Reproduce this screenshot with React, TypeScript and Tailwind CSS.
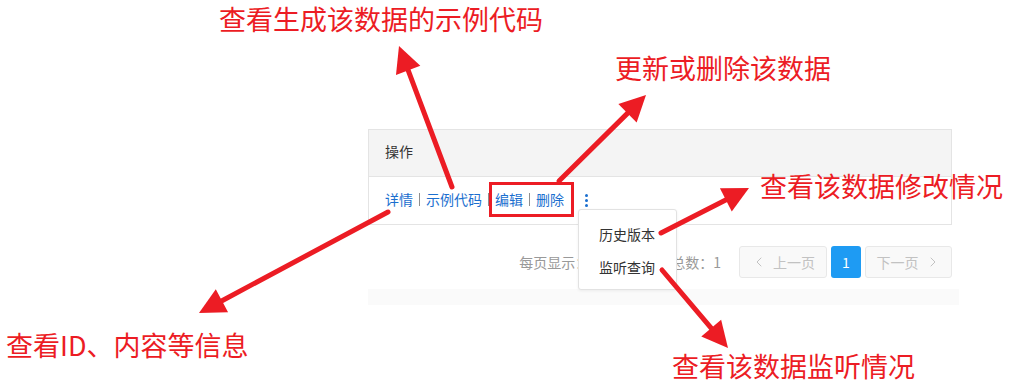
import React from "react";
import { ChevronLeft, ChevronRight } from "lucide-react";

const RED = "#ec1c24";

type Arrow = { x1: number; y1: number; x2: number; y2: number };

const ARROWS: Arrow[] = [
  { x1: 452, y1: 187, x2: 399, y2: 46 },
  { x1: 559, y1: 181, x2: 646, y2: 95 },
  { x1: 388, y1: 212, x2: 199, y2: 313 },
  { x1: 661, y1: 233, x2: 749, y2: 188 },
  { x1: 662, y1: 270, x2: 728, y2: 348 },
];

function ArrowShape({ x1, y1, x2, y2 }: Arrow) {
  const dx = x2 - x1;
  const dy = y2 - y1;
  const len = Math.hypot(dx, dy);
  const ux = dx / len;
  const uy = dy / len;
  const headLen = 26;
  const headW = 13;
  const bx = x2 - ux * headLen;
  const by = y2 - uy * headLen;
  const pts = [
    `${x2},${y2}`,
    `${bx - uy * headW},${by + ux * headW}`,
    `${bx + uy * headW},${by - ux * headW}`,
  ].join(" ");
  return (
    <g>
      <line x1={x1} y1={y1} x2={bx + ux * 2} y2={by + uy * 2} stroke={RED} strokeWidth={5} strokeLinecap="round" />
      <polygon points={pts} fill={RED} />
    </g>
  );
}

function Sep() {
  return <span className="mx-[6px] inline-block h-[13px] w-px bg-[#8f8f8f] align-[-1px]" />;
}

export default function App() {
  return (
    <div
      className="relative h-[388px] w-[1012px] overflow-hidden bg-white"
      style={{ fontFamily: '"Noto Sans CJK SC", "Noto Sans", sans-serif' }}
    >
      {/* table */}
      <div className="ml-[368px] pt-[129px]">
        <div className="w-[584px]">
          <div className="flex h-[48px] items-center border border-[#e4e4e4] bg-[#f4f4f4] pb-[3px] pl-[16px] text-[14px] text-[#333]">
            操作
          </div>
          <div className="flex h-[48px] items-center border-x border-b border-[#e4e4e4] pb-[2px] pl-[16px] text-[14px] text-[#1b6fcf]">
            <span>详情</span>
            <Sep />
            <span>示例代码</span>
            <Sep />
            <span className="relative">
              编辑
              <Sep />
              删除
              <span className="absolute -bottom-[7px] -left-[6px] -right-[10px] -top-[7px] border-[3px] border-[#ec1c24]" />
            </span>
            <span className="ml-[21px] flex flex-col gap-[2px] pt-[2px]">
              <span className="h-[3px] w-[3px] rounded-full bg-[#1b6fcf]" />
              <span className="h-[3px] w-[3px] rounded-full bg-[#1b6fcf]" />
              <span className="h-[3px] w-[3px] rounded-full bg-[#1b6fcf]" />
            </span>
          </div>

          {/* pagination */}
          <div className="mt-[21px] flex h-[32px] items-center justify-end text-[14px] text-[#999]">
            <span>每页显示：</span>
            <span className="w-[82px]" />
            <span>总数：1</span>
            <div className="ml-[18px] flex h-full w-[88px] items-center justify-center gap-[6px] rounded-[3px] border border-[#e8e8e8] bg-[#f9f9f9] text-[#c2c2c2]">
              <ChevronLeft className="h-[16px] w-[16px]" strokeWidth={1.5} />
              <span>上一页</span>
            </div>
            <div className="ml-[4px] flex h-full w-[30px] items-center justify-center rounded-[3px] bg-[#1e9bf3] text-white">
              1
            </div>
            <div className="ml-[4px] flex h-full w-[87px] items-center justify-center gap-[6px] rounded-[3px] border border-[#e8e8e8] bg-[#f9f9f9] text-[#c2c2c2]">
              <span>下一页</span>
              <ChevronRight className="h-[16px] w-[16px]" strokeWidth={1.5} />
            </div>
          </div>
        </div>
        <div className="mt-[11px] h-[16px] w-[591px] bg-[#fafafa]" />
      </div>

      {/* dropdown menu */}
      <div className="absolute left-[578px] top-[209px] flex h-[81px] w-[99px] flex-col rounded-[3px] border border-[#e2e2e2] bg-white pl-[20px] pt-[13px] text-[14px] text-[#333] shadow-[0_1px_3px_rgba(0,0,0,0.06)]">
        <span className="leading-[22px]">历史版本</span>
        <span className="mt-[11px] leading-[22px]">监听查询</span>
      </div>

      {/* annotations */}
      <svg className="pointer-events-none absolute left-0 top-0" width={1012} height={388}>
        {ARROWS.map((a, i) => (
          <ArrowShape key={i} {...a} />
        ))}
      </svg>
      <span className="absolute left-[219px] top-[1px] text-[27px] leading-[36px] text-[#ec1c24]">查看生成该数据的示例代码</span>
      <span className="absolute left-[615px] top-[50px] text-[27px] leading-[36px] text-[#ec1c24]">更新或删除该数据</span>
      <span className="absolute left-[760px] top-[168px] text-[27px] leading-[36px] text-[#ec1c24]">查看该数据修改情况</span>
      <span className="absolute left-[6px] top-[327px] text-[27px] leading-[36px] text-[#ec1c24]">查看ID、内容等信息</span>
      <span className="absolute left-[672px] top-[348px] text-[27px] leading-[36px] text-[#ec1c24]">查看该数据监听情况</span>
    </div>
  );
}
